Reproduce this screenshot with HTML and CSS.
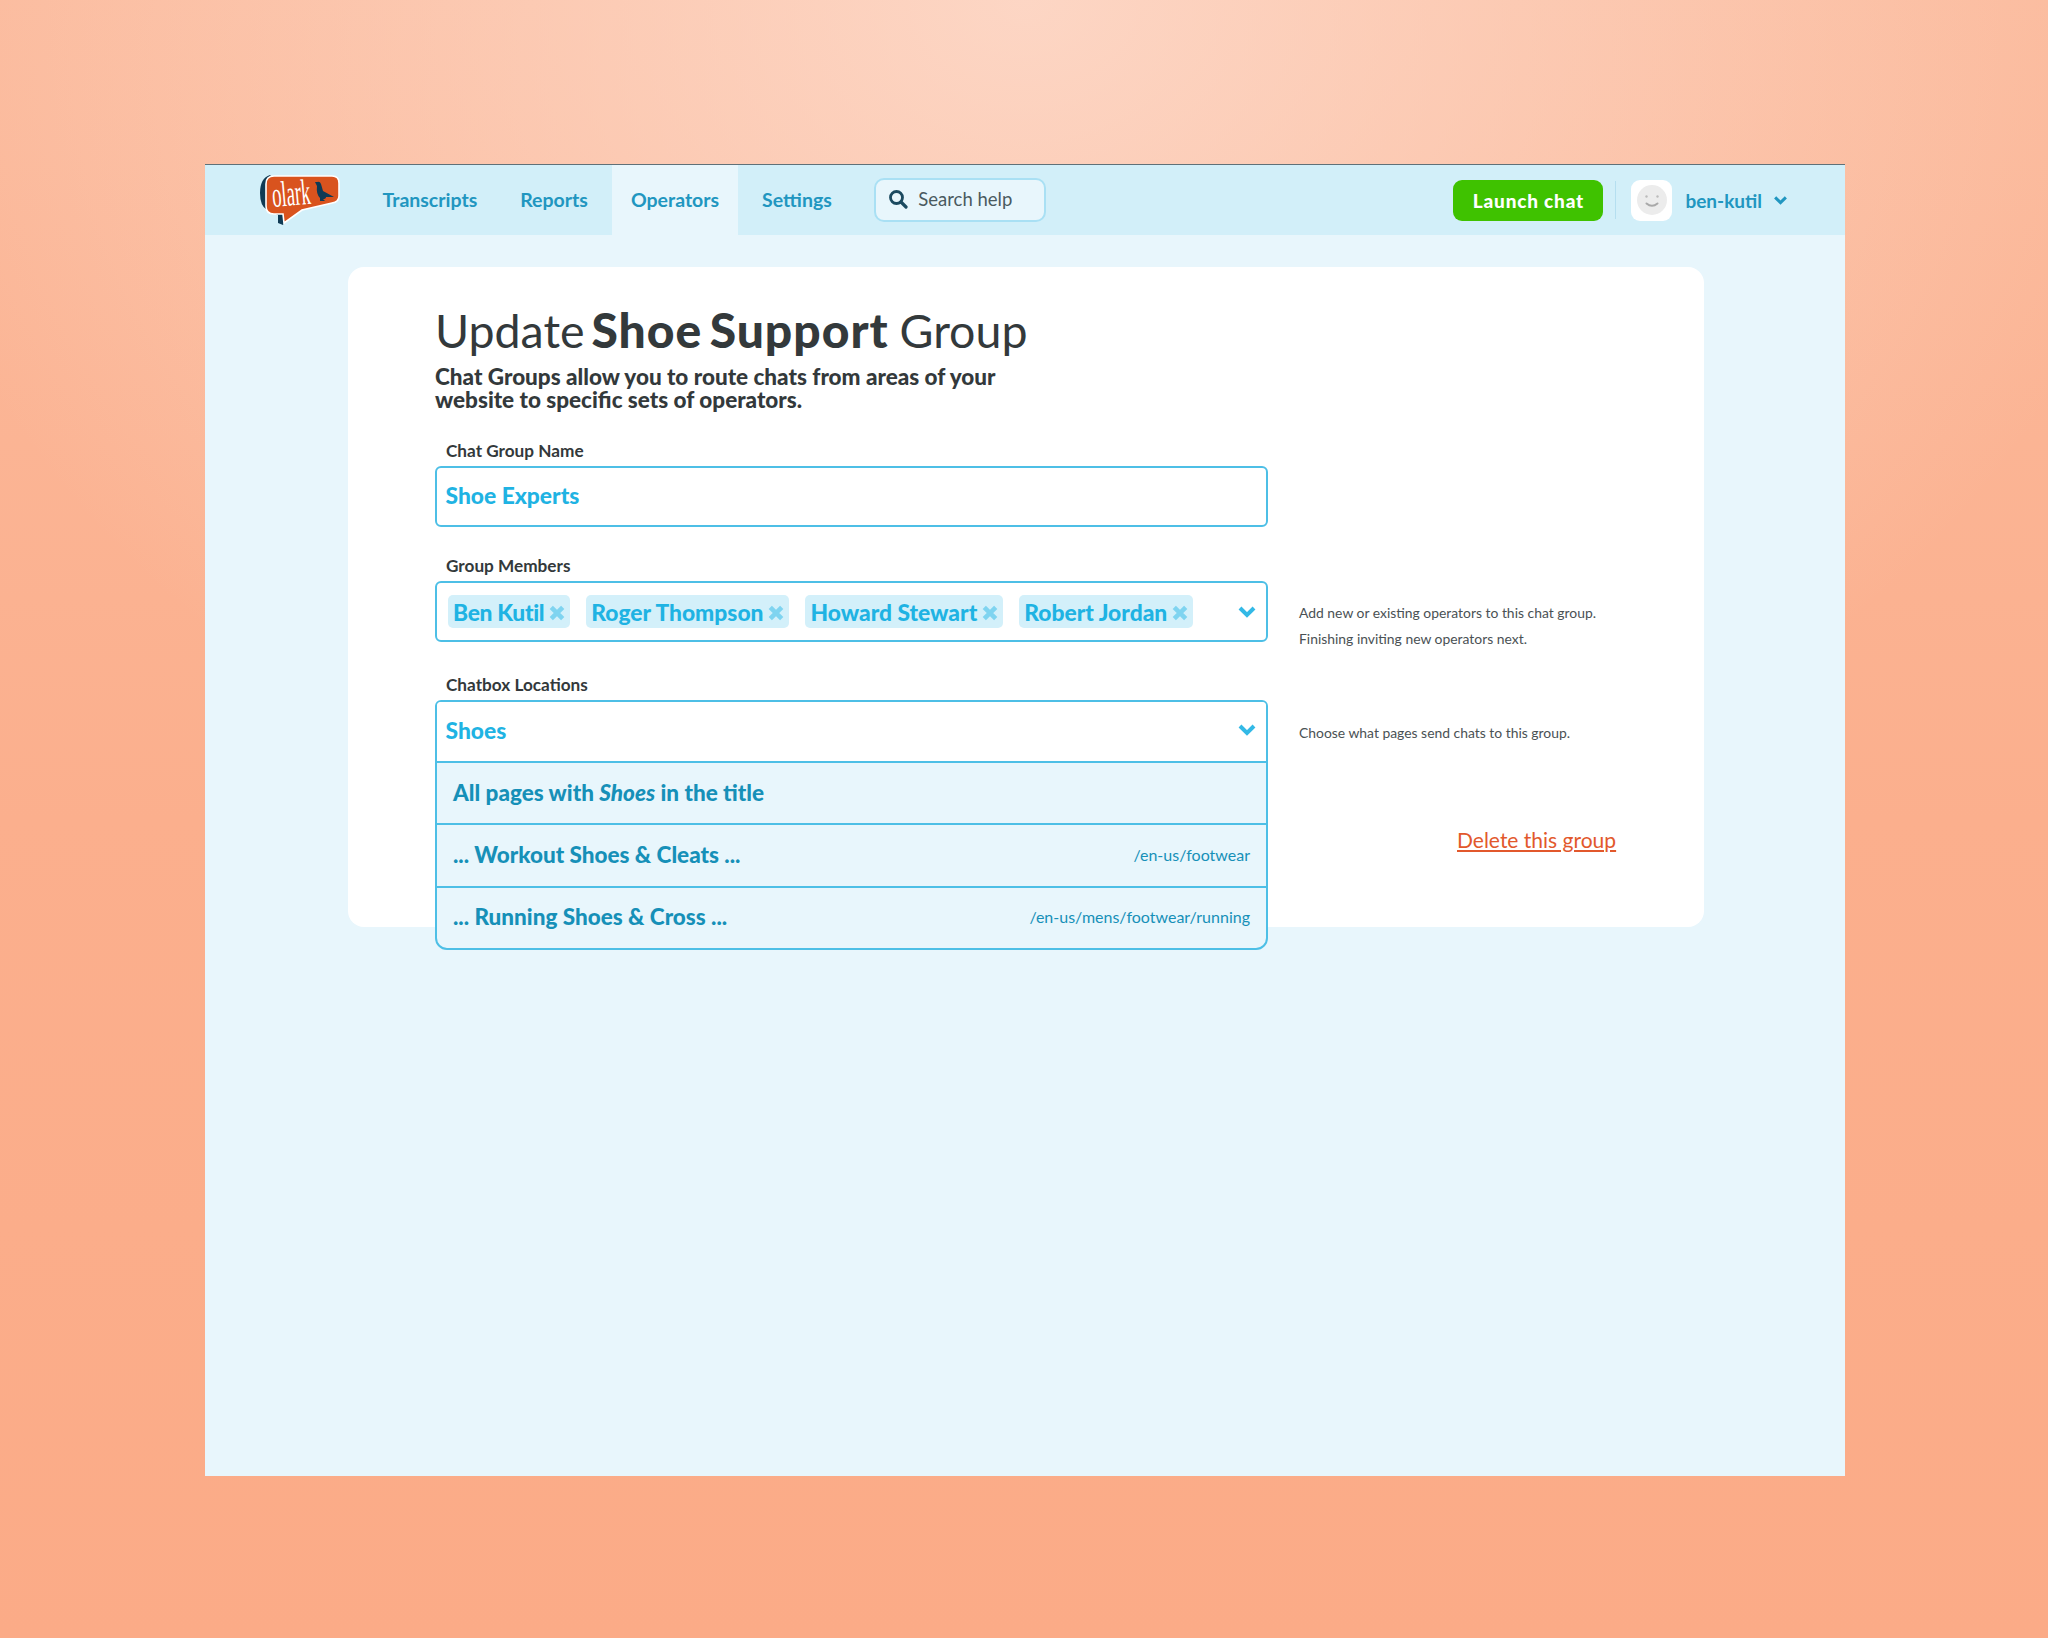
FILE: index.html
```html
<!DOCTYPE html>
<html lang="en">
<head>
<meta charset="utf-8">
<title>Update Shoe Support Group</title>
<link rel="stylesheet" href="styles.css">
</head>
<body>
<div class="app">
  <header class="topbar">
    <svg class="logo" viewBox="18 9 84 54" width="84" height="54" aria-label="olark">
      <path fill="#0f3a54" d="M30 11 Q20 14 20 29 Q20 42 27 46 L38 51 L38 59 L43 61 L48 50 L34 14 Z"/>
      <path fill="#d9531e" stroke="#fff" stroke-width="1.6" d="M34 12 H92 Q99 12 99 19 V32 Q99 38 92 39 L62 46 L44 59 L43 50 H34 Q26 50 26 42 V20 Q26 12 34 12 Z"/>
      <text class="logo-word" transform="rotate(-5 33 43) translate(33 43) scale(.52 1)">olark</text>
      <path fill="#0f3a54" d="M75 18 L77 18 Q80 17 81 20 L83 27 L94 33 L86 33 Q86 35 83 35 L85 37 L80 37 L80 34 Q76 30 77 22 Z"/>
    </svg>
    <nav class="nav">
      <a class="nav-item">Transcripts</a>
      <a class="nav-item">Reports</a>
      <a class="nav-item is-active">Operators</a>
      <a class="nav-item">Settings</a>
    </nav>
    <div class="search">
      <svg viewBox="0 0 20 20" width="20" height="20"><circle cx="8.5" cy="8.5" r="6" fill="none" stroke="#1b4a60" stroke-width="2.8"/><path d="M13 13 L18 18" stroke="#1b4a60" stroke-width="3.2" stroke-linecap="round"/></svg>
      <span>Search help</span>
    </div>
    <div class="top-right">
      <button class="launch">Launch chat</button>
      <span class="divider"></span>
      <span class="avatar">
        <svg viewBox="0 0 30 30" width="30" height="30"><circle cx="15" cy="15" r="15" fill="#ececec"/><circle cx="9.5" cy="11.5" r="1.2" fill="#bbb"/><circle cx="20.5" cy="11.5" r="1.2" fill="#bbb"/><path d="M9.5 18.5 Q15 23 20.5 18.5" fill="none" stroke="#a9a9a9" stroke-width="2" stroke-linecap="round"/></svg>
      </span>
      <span class="user">ben-kutil</span>
      <svg class="user-chev" viewBox="0 0 14 9" width="15" height="10"><path d="M2 2 L7 7 L12 2" fill="none" stroke="#2196c0" stroke-width="2.8"/></svg>
    </div>
  </header>

  <main class="card">
    <h1 class="title">Update <b>Shoe Support</b> Group</h1>
    <p class="lead">Chat Groups allow you to route chats from areas of your<br>website to specific sets of operators.</p>

    <div class="row row-name">
      <div class="field">
        <label class="label">Chat Group Name</label>
        <div class="box box-single"><span class="value">Shoe Experts</span></div>
      </div>
    </div>

    <div class="row row-members">
      <div class="field">
        <label class="label">Group Members</label>
        <div class="box box-tags">
          <span class="tag">Ben Kutil<svg class="tag-x" viewBox="0 0 14 14"><path d="M2 2 L12 12 M12 2 L2 12"/></svg></span>
          <span class="tag">Roger Thompson<svg class="tag-x" viewBox="0 0 14 14"><path d="M2 2 L12 12 M12 2 L2 12"/></svg></span>
          <span class="tag">Howard Stewart<svg class="tag-x" viewBox="0 0 14 14"><path d="M2 2 L12 12 M12 2 L2 12"/></svg></span>
          <span class="tag">Robert Jordan<svg class="tag-x" viewBox="0 0 14 14"><path d="M2 2 L12 12 M12 2 L2 12"/></svg></span>
          <svg class="chev" viewBox="0 0 18 12" width="18" height="12"><path d="M2 2 L9 9 L16 2"/></svg>
        </div>
      </div>
      <p class="hint hint-members">Add new or existing operators to this chat group.<br>Finishing inviting new operators next.</p>
    </div>

    <div class="row row-locations">
      <div class="field">
        <label class="label">Chatbox Locations</label>
        <div class="dropdown">
          <div class="drop-head"><span class="value">Shoes</span><svg class="chev" viewBox="0 0 18 12" width="18" height="12"><path d="M2 2 L9 9 L16 2"/></svg></div>
          <div class="drop-row"><span class="drop-title">All pages with <i>Shoes</i> in the title</span></div>
          <div class="drop-row"><span class="drop-title">... Workout Shoes &amp; Cleats ...</span><span class="drop-path">/en-us/footwear</span></div>
          <div class="drop-row"><span class="drop-title">... Running Shoes &amp; Cross ...</span><span class="drop-path">/en-us/mens/footwear/running</span></div>
        </div>
      </div>
      <div class="aside">
        <p class="hint hint-locations">Choose what pages send chats to this group.</p>
        <a class="delete">Delete this group</a>
      </div>
    </div>
  </main>
</div>
</body>
</html>
```
FILE: styles.css
```css
* { box-sizing: border-box; }
html, body { margin: 0; }
body {
  width: 2048px;
  height: 1638px;
  padding: 164px 0 0 205px;
  overflow: hidden;
  font-family: "Lato", "Open Sans", sans-serif;
  background:
    radial-gradient(ellipse 1150px 900px at 50% 0, rgba(253, 220, 205, .82) 0%, rgba(253, 220, 205, 0) 100%),
    linear-gradient(180deg, #fbba9c 0%, #fbaf8d 50%, #fbab87 100%);
}
.app {
  width: 1640px;
  height: 1312px;
  background: #e8f6fc;
  border-top: 1px solid #5f7078;
}
.topbar {
  display: flex;
  align-items: center;
  height: 70px;
  background: #d2eff9;
}
.logo { flex: none; align-self: flex-start; margin: 8px 0 0 53px; overflow: visible; }
.logo-word { font-family: "Liberation Serif", serif; font-size: 36px; fill: #fff; }
.nav { display: flex; align-self: stretch; margin-left: 19px; }
.nav-item {
  display: flex;
  align-items: center;
  padding: 0 21.5px 2px;
  font-size: 19.5px;
  font-weight: 700;
  color: #2196c0;
}
.nav-item.is-active { margin: 0 2.5px; padding: 0 19px 2px; background: #e8f6fc; }
.search {
  display: flex;
  align-items: center;
  gap: 10px;
  width: 172px;
  height: 44px;
  margin-left: 21px;
  padding: 0 0 2px 12px;
  background: #e8f6fc;
  border: 2px solid #a9e0f4;
  border-radius: 10px;
  font-size: 18.5px;
  color: #4a5a60;
}
.top-right { display: flex; align-items: center; margin-left: auto; padding-right: 57px; }
.launch {
  width: 150px;
  height: 41px;
  border: 0;
  border-radius: 9px;
  background: #3fc200;
  color: #fff;
  font: 900 19px "Lato", sans-serif;
  letter-spacing: .8px;
}
.divider { width: 1px; height: 38px; margin: 0 15px 0 12px; background: #b5dff0; }
.avatar {
  display: flex;
  align-items: center;
  justify-content: center;
  width: 41px;
  height: 41px;
  border-radius: 9px;
  background: #fff;
}
.user { margin-left: 13px; font-size: 19px; font-weight: 700; color: #2196c0; }
.user-chev { margin-left: 11px; }

.card {
  width: 1356px;
  height: 660px;
  margin: 32px 0 0 143px;
  padding: 36px 0 0 87px;
  background: #fff;
  border-radius: 16px;
}
.title { margin: 0; font-size: 46.5px; line-height: 54px; font-weight: 400; word-spacing: -5px; color: #33393b; }
.title b { margin-right: 4px; font-size: 48px; font-weight: 900; letter-spacing: 1px; }
.lead { margin: 8px 0 0; font-size: 22.5px; line-height: 23px; font-weight: 900; color: #33393b; }
.row { display: flex; }
.row-name { margin-top: 29px; }
.row-members { height: 87px; margin-top: 28px; }
.row-locations { margin-top: 32px; }
.field { width: 833px; flex: none; }
.label {
  display: block;
  height: 26px;
  margin: 0 0 0 11px;
  font-size: 17.2px;
  line-height: 22px;
  font-weight: 700;
  color: #33393b;
}
.box {
  display: flex;
  align-items: center;
  height: 61px;
  border: 2px solid #4dbfe6;
  border-radius: 6px;
  background: #fff;
}
.box-single { padding: 0 0 3px 8.5px; }
.value { font-size: 22.8px; font-weight: 900; color: #1fb3e3; }
.box-tags { padding-left: 11px; gap: 16px; }
.tag {
  display: flex;
  align-items: center;
  gap: 5px;
  height: 33px;
  padding: 0 5px;
  border-radius: 5px;
  background: #d3f0fa;
  font-size: 22.8px;
  font-weight: 900;
  color: #1fb3e3;
}
.tag:first-child { letter-spacing: -.3px; }
.tag-x { width: 16px; height: 16px; margin-top: 3px; fill: none; stroke: #7fd4f0; stroke-width: 4; }
.chev { flex: none; margin-left: auto; margin-right: 10px; fill: none; stroke: #33b9e6; stroke-width: 4; }
.dropdown {
  display: flex;
  flex-direction: column;
  height: 250px;
  border: 2px solid #4dbfe6;
  border-radius: 6px 6px 12px 12px;
  background: #e8f6fc;
}
.drop-head {
  display: flex;
  align-items: center;
  height: 59px;
  padding: 0 0 3px 8.5px;
  background: #fff;
  border-radius: 4px 4px 0 0;
}
.drop-row {
  display: flex;
  align-items: center;
  justify-content: space-between;
  flex: 1;
  padding: 0 16px 2px;
  border-top: 2px solid #4dbfe6;
}
.drop-title { font-size: 22.5px; font-weight: 900; color: #1690b8; }
.drop-title i { font-style: italic; }
.drop-path { font-size: 16px; color: #1690b8; }
.hint { margin: 0; font-size: 13.9px; line-height: 25.5px; color: #4a5154; }
.hint-members { margin: 45px 0 0 31px; }
.aside { display: flex; flex-direction: column; align-items: flex-start; padding-left: 31px; }
.hint-locations { margin-top: 46px; }
.delete {
  margin: 81px 0 0 158px;
  font-size: 21px;
  color: #e2582c;
  text-decoration: underline;
}
```
